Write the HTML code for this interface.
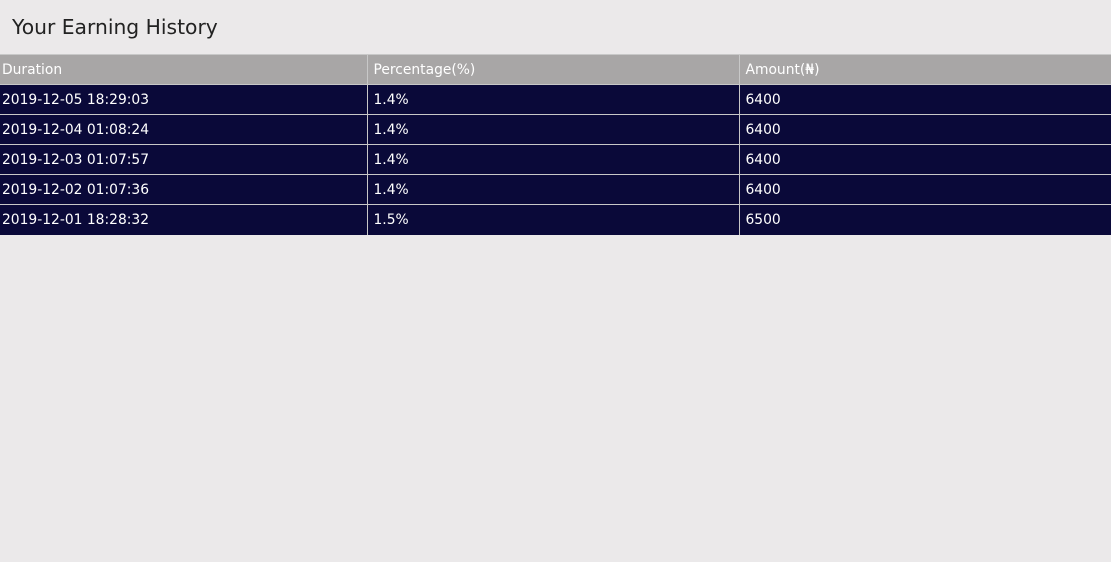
<!DOCTYPE html>
<html><head><meta charset="utf-8"><style>
html,body{margin:0;padding:0;width:1111px;height:562px;background:#ebe9ea;overflow:hidden;font-family:"DejaVu Sans",Verdana,sans-serif;}
h1{margin:0;position:absolute;left:12px;top:13px;font-weight:normal;font-size:20.3px;color:#222;line-height:28px;}
table{position:absolute;top:54px;left:0;width:1111px;border-collapse:collapse;}
td,th{height:29px;padding:1px 0 0 2px;font-size:13.85px;color:#fff;text-align:left;font-weight:normal;border-right:1px solid #c8c8c8;border-top:1px solid #c8c8c8;box-sizing:border-box;}
th{background:#a8a6a6;}
td{background:#0a0939;}
tr>*:first-child{width:367px;}
tr>*:nth-child(2){width:372px;padding-left:6px;}
tr>*:nth-child(3){padding-left:6px;border-right:none;}
tr{height:30px;}
</style></head><body>
<h1>Your Earning History</h1>
<table>
<tr><th>Duration</th><th>Percentage(%)</th><th>Amount(₦)</th></tr>
<tr><td>2019-12-05 18:29:03</td><td>1.4%</td><td>6400</td></tr>
<tr><td>2019-12-04 01:08:24</td><td>1.4%</td><td>6400</td></tr>
<tr><td>2019-12-03 01:07:57</td><td>1.4%</td><td>6400</td></tr>
<tr><td>2019-12-02 01:07:36</td><td>1.4%</td><td>6400</td></tr>
<tr><td>2019-12-01 18:28:32</td><td>1.5%</td><td>6500</td></tr>
</table>
</body></html>
